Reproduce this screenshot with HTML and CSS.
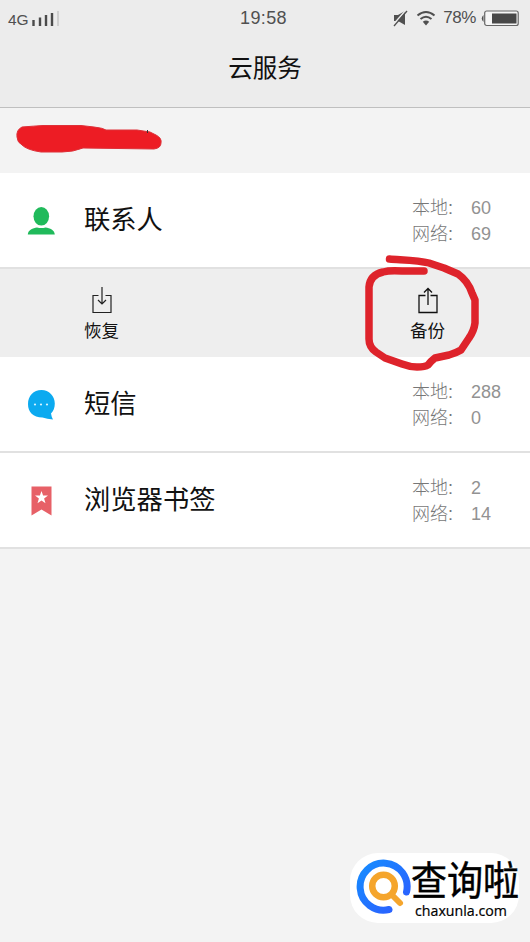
FILE: index.html
```html
<!DOCTYPE html>
<html lang="zh-CN">
<head>
<meta charset="utf-8">
<title>云服务</title>
<link rel="stylesheet" href="styles.css">
</head>
<body>
<header class="header">
  <div class="status">
    <div class="status-left">
      <span class="network">4G</span>
      <svg class="signal" width="27" height="15" viewBox="0 0 27 15"><path d="M1.500 9v6M8 6.500v8.500M14 4v11M20 2v13" stroke="#4b4b4b" stroke-width="2.400"/><path d="M26 0v15" stroke="#d0d0d0" stroke-width="2"/></svg>
    </div>
    <time class="time">19:58</time>
    <div class="status-right">
      <svg width="15" height="17" viewBox="0 0 15 17"><path d="M1 5h4l7-4v14l-7-4H1z" fill="#505050"/><path d="M0 15 13 0" stroke="#ececec" stroke-width="1.500"/><path d="M1 16 14 1" stroke="#505050" stroke-width="1.300"/></svg>
      <svg class="wifi" width="20" height="16" viewBox="0 0 20 16"><path d="M1.500 5.500Q10-1.500 18.500 5.500M4.500 9Q10 4.500 15.500 9" fill="none" stroke="#505050" stroke-width="2"/><path d="M6.800 11.700Q10 9.300 13.200 11.700L10 15.500z" fill="#505050"/></svg>
      <span class="percent">78%</span>
      <svg class="battery" width="38" height="17" viewBox="0 0 38 17"><path d="M2.500 5Q-1 8.500 2.500 12z" fill="#505050"/><rect x="3.700" y="1" width="33.500" height="14.500" rx="2" fill="#f6f6f6" stroke="#666" stroke-width="1.200"/><path d="M11 3.500h24.500v10H11z" fill="#484848"/></svg>
    </div>
  </div>
  <h1 class="title">云服务</h1>
</header>
<main>
  <section class="account">
    <svg class="redaction" width="150" height="30" viewBox="0 0 150 30"><path d="M7 2Q20 1 28 .5L66 .5 79 2Q88 3 91 5L122 5 135 7 141 10Q147 13 146 18 146 23 139 24L68 23Q58 27 47 27L26 27Q12 25 7 20 2 17 2 12 1 5 7 2z" fill="#ed1c24" stroke="#de3038"/><path d="M132.500 5v3" stroke="#333"/></svg>
  </section>
  <section class="row">
    <svg class="icon" width="28" height="30" viewBox="0 0 28 30"><ellipse cx="14.300" cy="10.300" rx="7.800" ry="9.300" fill="#20ba5b"/><path d="M.8 28.500C1 24 6 22 10 21.500Q14.300 22.500 18.500 21.500C23 22 27.500 24 27.800 28.500z" fill="#20ba5b"/></svg>
    <h2 class="name">联系人</h2>
    <dl class="counts"><dt>本地:</dt><dd>60</dd><dt>网络:</dt><dd>69</dd></dl>
  </section>
  <section class="actions">
    <div class="action">
      <svg width="20" height="27" viewBox="0 0 20 27"><path d="M6.500 8.500H1v17h18v-17h-5.500M10 0v17M6 13l4 4 4-4" fill="none" stroke="#222" stroke-width="1.200"/></svg>
      <span>恢复</span>
    </div>
    <div class="action">
      <svg width="20" height="27" viewBox="0 0 20 27"><path d="M7.500 8.500H1v17h18v-17h-6.500M10 18V1.500M6 5.500l4-4 4 4" fill="none" stroke="#111" stroke-width="1.300"/></svg>
      <span>备份</span>
      <svg class="marker" width="120" height="120" viewBox="360 252 120 120"><path d="M389.500 259C402 260 418 260 429 263L444 268 458 274Q468 281 472 293L475 300V323Q474 331 469 338L461 350Q456 353 449 355L435 358Q431 361 428 365 425 367 417 367 410 367 402 364L385 358 376 352Q369 347 369 339V287Q370 275 383 272 390 270 402 271H424" fill="none" stroke="#de232b" stroke-width="7.500" stroke-linecap="round" stroke-linejoin="round"/></svg>
    </div>
  </section>
  <section class="row">
    <svg class="icon" width="28" height="30" viewBox="0 0 28 30"><path d="M14.500 0C22 0 27.800 6 27.800 13.500 27.800 18 26.500 21 24 23.500Q24.500 27 26 29.500 20 29 15.500 27.500C6 27.500 1 22 1 14 1 6 6.500 0 14.500 0z" fill="#0caaf0"/><g fill="#d9f4ff"><circle cx="8" cy="14.500" r="1.100"/><circle cx="14" cy="14.500" r="1.100"/><circle cx="20" cy="14.500" r="1.100"/></g></svg>
    <h2 class="name">短信</h2>
    <dl class="counts"><dt>本地:</dt><dd>288</dd><dt>网络:</dt><dd>0</dd></dl>
  </section>
  <section class="row row-last">
    <svg class="icon" width="28" height="30" viewBox="0 0 28 30"><path d="M4.500 .5h20v29l-10-6-10 6z" fill="#e76067"/><path d="m14.500 5 1.600 4.500H21L17.100 12.500l1.400 4.700-4-2.700-4 2.700 1.400-4.700L8 9.500h4.900z" fill="#fff"/></svg>
    <h2 class="name">浏览器书签</h2>
    <dl class="counts"><dt>本地:</dt><dd>2</dd><dt>网络:</dt><dd>14</dd></dl>
  </section>
</main>
<aside class="brand">
  <svg class="brand-icon" width="56" height="56" viewBox="0 0 56 56"><defs><linearGradient id="blue" x1="0" y1="0" x2="1" y2="1"><stop stop-color="#168cff"/><stop offset="1" stop-color="#2d5cff"/></linearGradient></defs><path d="M50.500 33A23.500 23.500 0 1 0 33 50.500" fill="none" stroke="url(#blue)" stroke-width="7" stroke-linecap="round"/><circle cx="27.500" cy="27" r="11.300" fill="none" stroke="#f5a52c" stroke-width="6.500"/><path d="m36 36 8 8" stroke="#f5a52c" stroke-width="6" stroke-linecap="round"/></svg>
  <div class="brand-copy"><span class="brand-name">查询啦</span><span class="domain">chaxunla.com</span></div>
</aside>
</body>
</html>
```
FILE: styles.css
```css
* { box-sizing: border-box; }
body {
  margin: 0;
  height: 942px;
  overflow: hidden;
  background: #f3f3f3;
  color: #111;
  font-family: "Liberation Sans", "Noto Sans CJK SC", sans-serif;
}
h1, h2, dl, dd { margin: 0; font-weight: 400; }
svg { display: block; flex: none; }
.header { height: 108px; background: #ececec; border-bottom: 1px solid #bfbfbf; }
.status {
  display: grid;
  grid-template-columns: 1fr auto 1fr;
  align-items: center;
  height: 36px;
  padding: 0 11px 0 8px;
  color: #505050;
}
.status-left, .status-right { display: flex; align-items: center; }
.network { padding-top: 4px; font-size: 15.5px; letter-spacing: -.2px; }
.signal { margin: 1px 0 0 4px; }
.time { font-size: 18px; letter-spacing: .4px; }
.status-right { justify-content: flex-end; }
.wifi { margin: 0 0 0 8px; }
.percent { margin: 0 5px 0 7px; font-size: 17px; letter-spacing: -.4px; }
.title { font-size: 24.5px; line-height: 66px; text-align: center; }
.account { height: 65px; padding: 17px 15px; }
.row {
  display: flex;
  height: 96px;
  padding: 0 19px 0 27px;
  background: #fff;
  border-bottom: 2px solid #e1e1e1;
}
.icon { margin-top: 33px; }
.name { margin-left: 29px; font-size: 26.3px; line-height: 94px; }
.counts {
  display: grid;
  grid-template-columns: 59px 40px;
  grid-auto-rows: 26px;
  width: 99px;
  margin: 22px 0 0 auto;
  color: #929292;
  font-size: 18px;
  line-height: 26px;
}
.counts dt { color: #777; font-weight: 300; white-space: nowrap; }
.actions { display: flex; justify-content: space-between; height: 88px; padding: 18px 84px 18px 83px; background: #eee; }
.action { position: relative; display: flex; flex-direction: column; align-items: center; width: 37px; font-size: 17.5px; line-height: 34px; white-space: nowrap; }
.marker { position: absolute; left: -49px; top: -35px; z-index: 1; }
.brand {
  position: absolute;
  left: 350px;
  top: 853px;
  display: flex;
  width: 169px;
  height: 70px;
  padding: 6px 0 0 6px;
  background: #fff;
  border-radius: 28px;
}
.brand-copy { display: flex; flex-direction: column; width: 108px; height: 62px; margin-left: -1px; color: #000; }
.brand-name { height: 43px; font-size: 36px; line-height: 43px; white-space: nowrap; transform: translateY(1px) scaleY(1.1); -webkit-text-stroke: .4px #000; }
.domain { padding-left: 4px; font-family: "Open Sans", "Noto Sans", sans-serif; font-size: 14.2px; font-weight: 500; line-height: 18px; white-space: nowrap; -webkit-text-stroke: .2px #000; }
```
